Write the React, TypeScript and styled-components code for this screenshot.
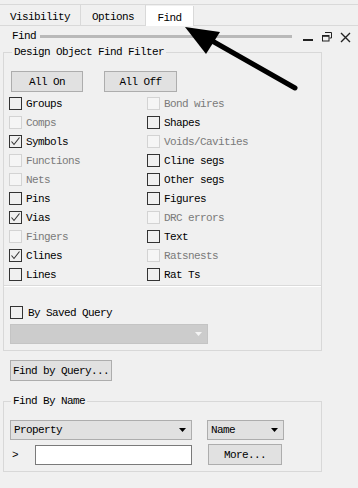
import React from "react";
import styled, { createGlobalStyle } from "styled-components";

const GlobalStyle = createGlobalStyle`
  html, body { margin: 0; padding: 0; background: #f0f0f0; }
  * { box-sizing: border-box; }
`;

const monoFont = `"Liberation Mono", "DejaVu Sans Mono", monospace`;

const Window = styled.div`
  position: relative;
  width: 358px;
  height: 488px;
  overflow: hidden;
  background: #f0f0f0;
  font-family: ${monoFont};
  font-size: 11px;
  letter-spacing: -0.6px;
  color: #000;
`;

const TabBar = styled.div`
  display: flex;
  margin-top: 4px;
  height: 22px;
  border-top: 1px solid #d9d9d9;
  border-bottom: 1px solid #d9d9d9;
`;

const Tab = styled.div<{ $width: number; $active?: boolean }>`
  width: ${(p) => p.$width}px;
  display: flex;
  align-items: center;
  justify-content: center;
  padding-top: 3px;
  border-right: 1px solid #d9d9d9;
  background: ${(p) => (p.$active ? "#ffffff" : "transparent")};
  margin-bottom: ${(p) => (p.$active ? "-1px" : "0")};
  margin-top: ${(p) => (p.$active ? "1px" : "0")};
`;

const TitleRow = styled.div`
  display: flex;
  align-items: center;
  height: 19px;
  padding: 1px 0 0 12px;
`;

const TitleBar = styled.div`
  width: 252px;
  height: 3px;
  margin-left: 4px;
  background: #b9b9b9;
`;

const TitleIcons = styled.div`
  display: flex;
  align-items: center;
  gap: 8px;
  margin-left: 11px;
  margin-top: 2px;
`;

const GroupBox = styled.fieldset<{ $titleOffset: number }>`
  width: 319px;
  margin: 0 0 0 3px;
  padding: 0;
  border: 1px solid #d8d8d8;
  min-width: 0;

  & > legend {
    margin-left: ${(p) => p.$titleOffset}px;
    padding: 0 2px;
    line-height: 14px;
  }
`;

const ButtonRow = styled.div`
  display: flex;
  gap: 21px;
  margin-top: 12px;
  padding-left: 7px;
`;

const Button = styled.div<{ $width: number; $align?: "left" | "center" }>`
  width: ${(p) => p.$width}px;
  height: 21px;
  display: flex;
  align-items: center;
  justify-content: ${(p) => (p.$align === "left" ? "flex-start" : "center")};
  padding-left: ${(p) => (p.$align === "left" ? "2px" : "0")};
  background: #e1e1e1;
  border: 1px solid #adadad;
`;

const CheckGrid = styled.div`
  display: grid;
  grid-template-columns: 138px 1fr;
  grid-auto-flow: column;
  grid-template-rows: repeat(10, 19px);
  margin-top: 2px;
  padding-left: 5px;
`;

const CheckRow = styled.div<{ $disabled?: boolean }>`
  display: flex;
  align-items: center;
  gap: 4px;
  color: ${(p) => (p.$disabled ? "#7a7a7a" : "#000")};
`;

const Box = styled.span<{ $disabled?: boolean }>`
  width: 13px;
  height: 13px;
  flex: none;
  display: flex;
  align-items: center;
  justify-content: center;
  border: 1px solid ${(p) => (p.$disabled ? "#d3d3d3" : "#333333")};
  background: ${(p) => (p.$disabled ? "#f5f5f5" : "transparent")};
`;

const Separator = styled.div`
  height: 2px;
  margin-top: 1px;
  border-top: 1px solid #dadada;
  border-bottom: 1px solid #ffffff;
`;

const SavedQueryRow = styled(CheckRow)`
  margin-top: 19px;
  padding-left: 6px;
  gap: 5px;
  height: 13px;
`;

const DisabledSelect = styled.div`
  width: 198px;
  height: 20px;
  margin: 5px 0 6px 6px;
  display: flex;
  align-items: center;
  justify-content: flex-end;
  padding-right: 5px;
  background: #cccccc;
  border: 1px solid #c4c4c4;
`;

const QueryButtonWrap = styled.div`
  margin: 9px 0 13px 10px;
`;

const NameRow = styled.div<{ $top: number; $bottom?: number }>`
  display: flex;
  align-items: center;
  margin-top: ${(p) => p.$top}px;
  margin-bottom: ${(p) => p.$bottom ?? 0}px;
  padding-left: 6px;
`;

const Combo = styled.div<{ $width: number; $gap?: number }>`
  width: ${(p) => p.$width}px;
  height: 20px;
  margin-left: ${(p) => p.$gap ?? 0}px;
  display: flex;
  align-items: center;
  justify-content: space-between;
  padding: 0 5px 0 3px;
  background: #e1e1e1;
  border: 1px solid #adadad;
`;

const Prompt = styled.span`
  width: 25px;
  padding-left: 2px;
`;

const TextInput = styled.div`
  width: 157px;
  height: 20px;
  background: #ffffff;
  border: 1px solid #7a7a7a;
`;

const MoreButton = styled(Button)`
  margin-left: 16px;
`;

const Pointer = styled.svg`
  position: absolute;
  left: 0;
  top: 0;
  pointer-events: none;
`;

const Check = () => (
  <svg width="11" height="11" viewBox="0 0 11 11">
    <path d="M1.5 5.5 L4 8.5 L9.5 1.5" fill="none" stroke="#333" strokeWidth="1.1" />
  </svg>
);

const Arrow = ({ color = "#000" }: { color?: string }) => (
  <svg width="7" height="4" viewBox="0 0 7 4">
    <path d="M0 0 H7 L3.5 4 Z" fill={color} />
  </svg>
);

type Item = { label: string; checked?: boolean; disabled?: boolean };

const filters: Item[] = [
  { label: "Groups" },
  { label: "Comps", disabled: true },
  { label: "Symbols", checked: true },
  { label: "Functions", disabled: true },
  { label: "Nets", disabled: true },
  { label: "Pins" },
  { label: "Vias", checked: true },
  { label: "Fingers", disabled: true },
  { label: "Clines", checked: true },
  { label: "Lines" },
  { label: "Bond wires", disabled: true },
  { label: "Shapes" },
  { label: "Voids/Cavities", disabled: true },
  { label: "Cline segs" },
  { label: "Other segs" },
  { label: "Figures" },
  { label: "DRC errors", disabled: true },
  { label: "Text" },
  { label: "Ratsnests", disabled: true },
  { label: "Rat Ts" },
];

export default function App() {
  return (
    <Window>
      <GlobalStyle />
      <TabBar>
        <Tab $width={81}>Visibility</Tab>
        <Tab $width={65}>Options</Tab>
        <Tab $width={48} $active>
          Find
        </Tab>
      </TabBar>

      <TitleRow>
        <span>Find</span>
        <TitleBar />
        <TitleIcons>
          <svg width="11" height="10" viewBox="0 0 11 10">
            <rect x="0" y="7" width="10" height="2" fill="#222" />
          </svg>
          <svg width="10" height="10" viewBox="0 0 10 10">
            <path d="M3 0.5 H9.5 V6 H7.5" fill="none" stroke="#222" strokeWidth="1" />
            <rect x="0.5" y="3.5" width="6.5" height="5.5" fill="none" stroke="#222" strokeWidth="1" />
            <rect x="0.5" y="3.5" width="6.5" height="1.3" fill="#222" />
          </svg>
          <svg width="11" height="11" viewBox="0 0 11 11">
            <path d="M1 1 L10 10 M10 1 L1 10" stroke="#222" strokeWidth="1.4" />
          </svg>
        </TitleIcons>
      </TitleRow>

      <GroupBox $titleOffset={8}>
        <legend>Design Object Find Filter</legend>
        <ButtonRow>
          <Button $width={72}>All On</Button>
          <Button $width={73}>All Off</Button>
        </ButtonRow>
        <CheckGrid>
          {filters.map((f) => (
            <CheckRow key={f.label} $disabled={f.disabled}>
              <Box $disabled={f.disabled}>{f.checked && <Check />}</Box>
              <span>{f.label}</span>
            </CheckRow>
          ))}
        </CheckGrid>
        <Separator />
        <SavedQueryRow>
          <Box />
          <span>By Saved Query</span>
        </SavedQueryRow>
        <DisabledSelect>
          <Arrow color="#f4f4f4" />
        </DisabledSelect>
      </GroupBox>

      <QueryButtonWrap>
        <Button $width={102} $align="left">
          Find by Query...
        </Button>
      </QueryButtonWrap>

      <GroupBox $titleOffset={7}>
        <legend>Find By Name</legend>
        <NameRow $top={12}>
          <Combo $width={182}>
            <span>Property</span>
            <Arrow />
          </Combo>
          <Combo $width={77} $gap={15}>
            <span>Name</span>
            <Arrow />
          </Combo>
        </NameRow>
        <NameRow $top={4} $bottom={6}>
          <Prompt>&gt;</Prompt>
          <TextInput />
          <MoreButton $width={74}>More...</MoreButton>
        </NameRow>
      </GroupBox>

      <Pointer width="358" height="488" viewBox="0 0 358 488">
        <line x1="295" y1="88" x2="207" y2="38" stroke="#000" strokeWidth="5" strokeLinecap="round" />
        <polygon points="185,27 220,32 206,54" fill="#000" />
      </Pointer>
    </Window>
  );
}
